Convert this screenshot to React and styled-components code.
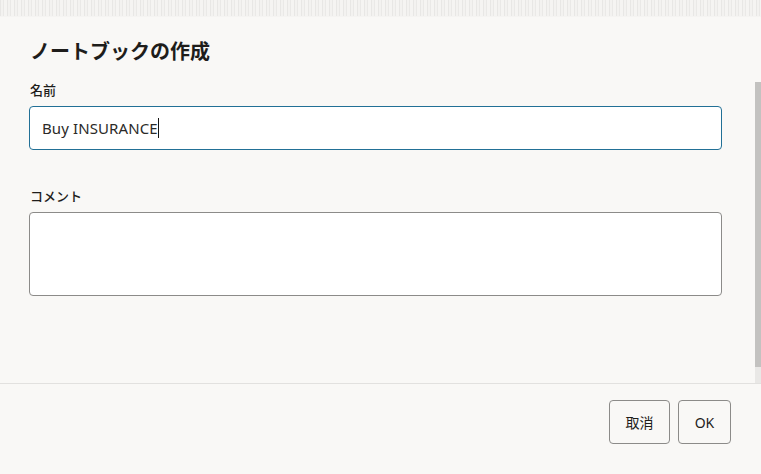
import React from "react";
import styled, { createGlobalStyle } from "styled-components";

const GlobalStyle = createGlobalStyle`
  html, body {
    margin: 0;
    padding: 0;
    background: #f9f8f6;
    font-family: "Noto Sans", "Noto Sans CJK JP", sans-serif;
    color: #161513;
  }
  * {
    box-sizing: border-box;
  }
`;

const App = () => {
  return (
    <>
      <GlobalStyle />
      <Page>
        <TopBand />
        <Dialog>
          <BodyRow>
            <Content>
              <Title>ノートブックの作成</Title>
              <Field>
                <Label>名前</Label>
                <InputBox $active>
                  <InputText>Buy INSURANCE</InputText>
                  <Caret />
                </InputBox>
              </Field>
              <Field $gap>
                <Label>コメント</Label>
                <TextArea />
              </Field>
            </Content>
            <ScrollTrack>
              <ScrollThumb />
            </ScrollTrack>
          </BodyRow>
          <Footer>
            <Button>取消</Button>
            <Button>OK</Button>
          </Footer>
        </Dialog>
      </Page>
    </>
  );
};

const Page = styled.div`
  width: 761px;
  height: 474px;
  display: flex;
  flex-direction: column;
  overflow: hidden;
`;

const TopBand = styled.div`
  height: 17px;
  flex-shrink: 0;
  background-color: #efeeec;
  background-image: repeating-linear-gradient(
      90deg,
      #e8e7e5 0px,
      #e8e7e5 1px,
      #f3f2f0 1px,
      #f3f2f0 3px,
      #eae9e7 3px,
      #eae9e7 4px,
      #f5f4f2 4px,
      #f5f4f2 7px
    );
  border-bottom: 1px solid #f5f4f2;
`;

const Dialog = styled.div`
  flex: 1;
  display: flex;
  flex-direction: column;
  background: #f9f8f6;
`;

const BodyRow = styled.div`
  height: 366px;
  display: flex;
`;

const Content = styled.div`
  flex: 1;
  padding: 21px 33px 0 29px;
  display: flex;
  flex-direction: column;
`;

const Title = styled.h1`
  margin: 0 0 0 1px;
  font-size: 20px;
  line-height: 28px;
  font-weight: 700;
  color: #1e1d1b;
`;

const Field = styled.div`
  display: flex;
  flex-direction: column;
  gap: 7px;
  margin-top: ${(p) => (p.$gap ? "37px" : "15px")};
`;

const Label = styled.div`
  margin-left: 1px;
  font-size: 13px;
  line-height: 18px;
  font-weight: 500;
  color: #1e1d1b;
`;

const InputBox = styled.div`
  height: 44px;
  background: #ffffff;
  border: 1px solid ${(p) => (p.$active ? "#227096" : "#8c8b89")};
  border-radius: 4px;
  display: flex;
  align-items: center;
  padding: 0 12px;
`;

const InputText = styled.span`
  font-size: 15px;
  color: #2b2a28;
  letter-spacing: 0.1px;
`;

const Caret = styled.span`
  width: 1px;
  height: 20px;
  background: #161513;
`;

const TextArea = styled.div`
  height: 84px;
  background: #ffffff;
  border: 1px solid #8c8b89;
  border-radius: 4px;
`;

const ScrollTrack = styled.div`
  width: 6px;
  background: #e9e8e6;
  margin-top: 65px;
  display: flex;
  flex-direction: column;
`;

const ScrollThumb = styled.div`
  height: 285px;
  background: #c3c2c0;
`;

const Footer = styled.div`
  flex: 1;
  border-top: 1px solid #e2e1df;
  display: flex;
  justify-content: flex-end;
  align-items: flex-start;
  gap: 8px;
  padding: 16px 30px 0 0;
`;

const Button = styled.button`
  height: 44px;
  min-width: 53px;
  padding: 0 15.5px;
  background: #f9f8f6;
  border: 1px solid #8c8b89;
  border-radius: 4px;
  font-family: "Noto Sans", "Noto Sans CJK JP", sans-serif;
  font-size: 14px;
  color: #1e1d1b;
  cursor: pointer;
`;

export default App;
